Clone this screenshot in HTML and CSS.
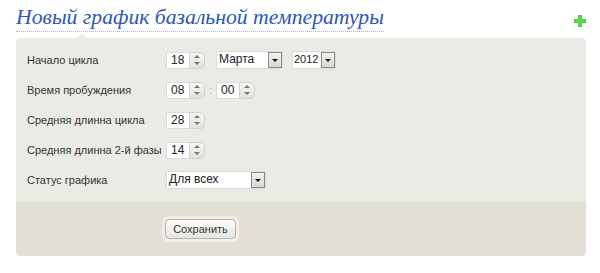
FILE: index.html
```html
<!DOCTYPE html>
<html lang="ru">

<head>
    <meta charset="UTF-8">
    <meta name="viewport" content="width=device-width, initial-scale=1.0">
    <title>Новый график</title>
    <link rel="stylesheet" href="styles.css">
</head>

<body>
    <div class="page">
        <div class="page-head">
            <h1 class="page-title">Новый график базальной температуры</h1>
            <span class="add-btn">
                <svg width="12" height="12" viewBox="0 0 12 12">
                    <path d="M4 0h4v4h4v4h-4v4h-4v-4h-4v-4h4z" fill="#3fc43a" />
                    <path d="M4.5 0.5h3v4h4v3h-4v4h-3v-4h-4v-3h4z" fill="#5ad955" />
                </svg>
            </span>
        </div>

        <div class="panel">
            <div class="panel-body">
                <div class="row">
                    <label class="row-label">Начало цикла</label>
                    <div class="row-fields">
                        <span class="spin"><span class="spin-val">18</span><span class="spin-btns"><i class="up"></i><i class="down"></i></span></span>
                        <span class="sel sel-month"><span class="sel-val">Марта</span><span class="sel-btn"></span></span>
                        <span class="sel sel-year"><span class="sel-val">2012</span><span class="sel-btn"></span></span>
                    </div>
                </div>
                <div class="row">
                    <label class="row-label">Время пробуждения</label>
                    <div class="row-fields">
                        <span class="spin"><span class="spin-val">08</span><span class="spin-btns"><i class="up"></i><i class="down"></i></span></span>
                        <span class="colon">:</span>
                        <span class="spin"><span class="spin-val">00</span><span class="spin-btns"><i class="up"></i><i class="down"></i></span></span>
                    </div>
                </div>
                <div class="row">
                    <label class="row-label">Средняя длинна цикла</label>
                    <div class="row-fields">
                        <span class="spin"><span class="spin-val">28</span><span class="spin-btns"><i class="up"></i><i class="down"></i></span></span>
                    </div>
                </div>
                <div class="row">
                    <label class="row-label">Средняя длинна 2-й фазы</label>
                    <div class="row-fields">
                        <span class="spin"><span class="spin-val">14</span><span class="spin-btns"><i class="up"></i><i class="down"></i></span></span>
                    </div>
                </div>
                <div class="row">
                    <label class="row-label">Статус графика</label>
                    <div class="row-fields">
                        <span class="sel sel-status"><span class="sel-val">Для всех</span><span class="sel-btn"></span></span>
                    </div>
                </div>
            </div>
            <div class="panel-foot">
                <span class="btn-halo"><button class="save-btn">Сохранить</button></span>
            </div>
        </div>
    </div>
</body>

</html>
```

FILE: styles.css
```css
body {
    margin: 0;
    padding: 0;
    background-color: #fff;
    font-family: "Liberation Sans", Arial, sans-serif;
}

.page {
    width: 570px;
    padding: 5px 14px 0 16px;
}

.page-head {
    display: flex;
    justify-content: space-between;
    align-items: flex-start;
    height: 33px;
}

.page-title {
    margin: 0;
    padding-bottom: 1px;
    font-family: "Liberation Serif", "DejaVu Serif", serif;
    font-style: italic;
    font-weight: normal;
    font-size: 21.7px;
    line-height: 25px;
    color: #2c57b8;
    border-bottom: 1px dotted #9db8e6;
}

.add-btn {
    margin-top: 8px;
    width: 12px;
    height: 12px;
}

.panel {
    position: relative;
    border-radius: 4px;
}

/* little notch above the panel */
.panel::before {
    content: "";
    position: absolute;
    top: -5px;
    left: 61px;
    border-left: 5px solid transparent;
    border-right: 5px solid transparent;
    border-bottom: 5px solid #ebebe6;
}

.panel-body {
    background-color: #ebebe6;
    border-radius: 4px 4px 0 0;
    padding: 7px 0 7px 11px;
}

.row {
    display: flex;
    align-items: center;
    height: 30px;
    font-size: 11px;
    color: #333;
}

.row-label {
    width: 139px;
}

.row-fields {
    display: flex;
    align-items: center;
}

.spin {
    display: flex;
    height: 17px;
}

.spin-val {
    width: 18px;
    padding-left: 4px;
    background-color: #fff;
    border: 1px solid #dcdcd6;
    border-right: none;
    line-height: 15px;
    font-size: 12px;
    color: #222;
}

.spin-btns {
    display: flex;
    flex-direction: column;
    justify-content: space-around;
    align-items: center;
    width: 14px;
    background: linear-gradient(#f6f6f4, #e2e2dc);
    border: 1px solid #d2d2cc;
    border-radius: 0 5px 5px 0;
}

.spin-btns i {
    width: 0;
    height: 0;
    border-left: 3px solid transparent;
    border-right: 3px solid transparent;
}

.spin-btns .up {
    border-bottom: 3px solid #777;
}

.spin-btns .down {
    border-top: 3px solid #777;
}

.colon {
    width: 11px;
    text-align: center;
    color: #aaa;
    font-size: 11px;
}

.sel {
    display: flex;
    height: 16px;
    background-color: #fff;
    border: 1px solid #dcdcd6;
}

.sel-val {
    flex: 1;
    padding-left: 2px;
    line-height: 15px;
    font-size: 12px;
    color: #222;
    white-space: nowrap;
}

.sel-btn {
    position: relative;
    flex: none;
    width: 14px;
    background: linear-gradient(#f2f2f0, #d8d8d4);
    border: 1px solid #8a8a88;
    box-sizing: border-box;
}

.sel-btn::after {
    content: "";
    position: absolute;
    left: 3px;
    top: 6px;
    border-left: 3px solid transparent;
    border-right: 3px solid transparent;
    border-top: 3px solid #111;
}

.sel-month {
    width: 65px;
    margin-left: 11px;
}

.sel-year {
    width: 42px;
    margin-left: 9px;
}

.sel-year .sel-val {
    font-size: 11px;
    padding-left: 1px;
}

.sel-status {
    width: 98px;
}

.panel-foot {
    background-color: #e3dfd4;
    border-radius: 0 0 4px 4px;
    height: 54px;
    padding-left: 146px;
    display: flex;
    align-items: center;
}

.btn-halo {
    display: inline-block;
    padding: 3px;
    background-color: #f1eee6;
    border-radius: 7px;
}

.save-btn {
    display: block;
    width: 71px;
    height: 20px;
    padding: 0;
    font-family: "Liberation Sans", Arial, sans-serif;
    font-size: 11px;
    color: #333;
    background: linear-gradient(#fdfdfd, #e4e4e0);
    border: 1px solid #b4b4ae;
    border-radius: 4px;
}
```
